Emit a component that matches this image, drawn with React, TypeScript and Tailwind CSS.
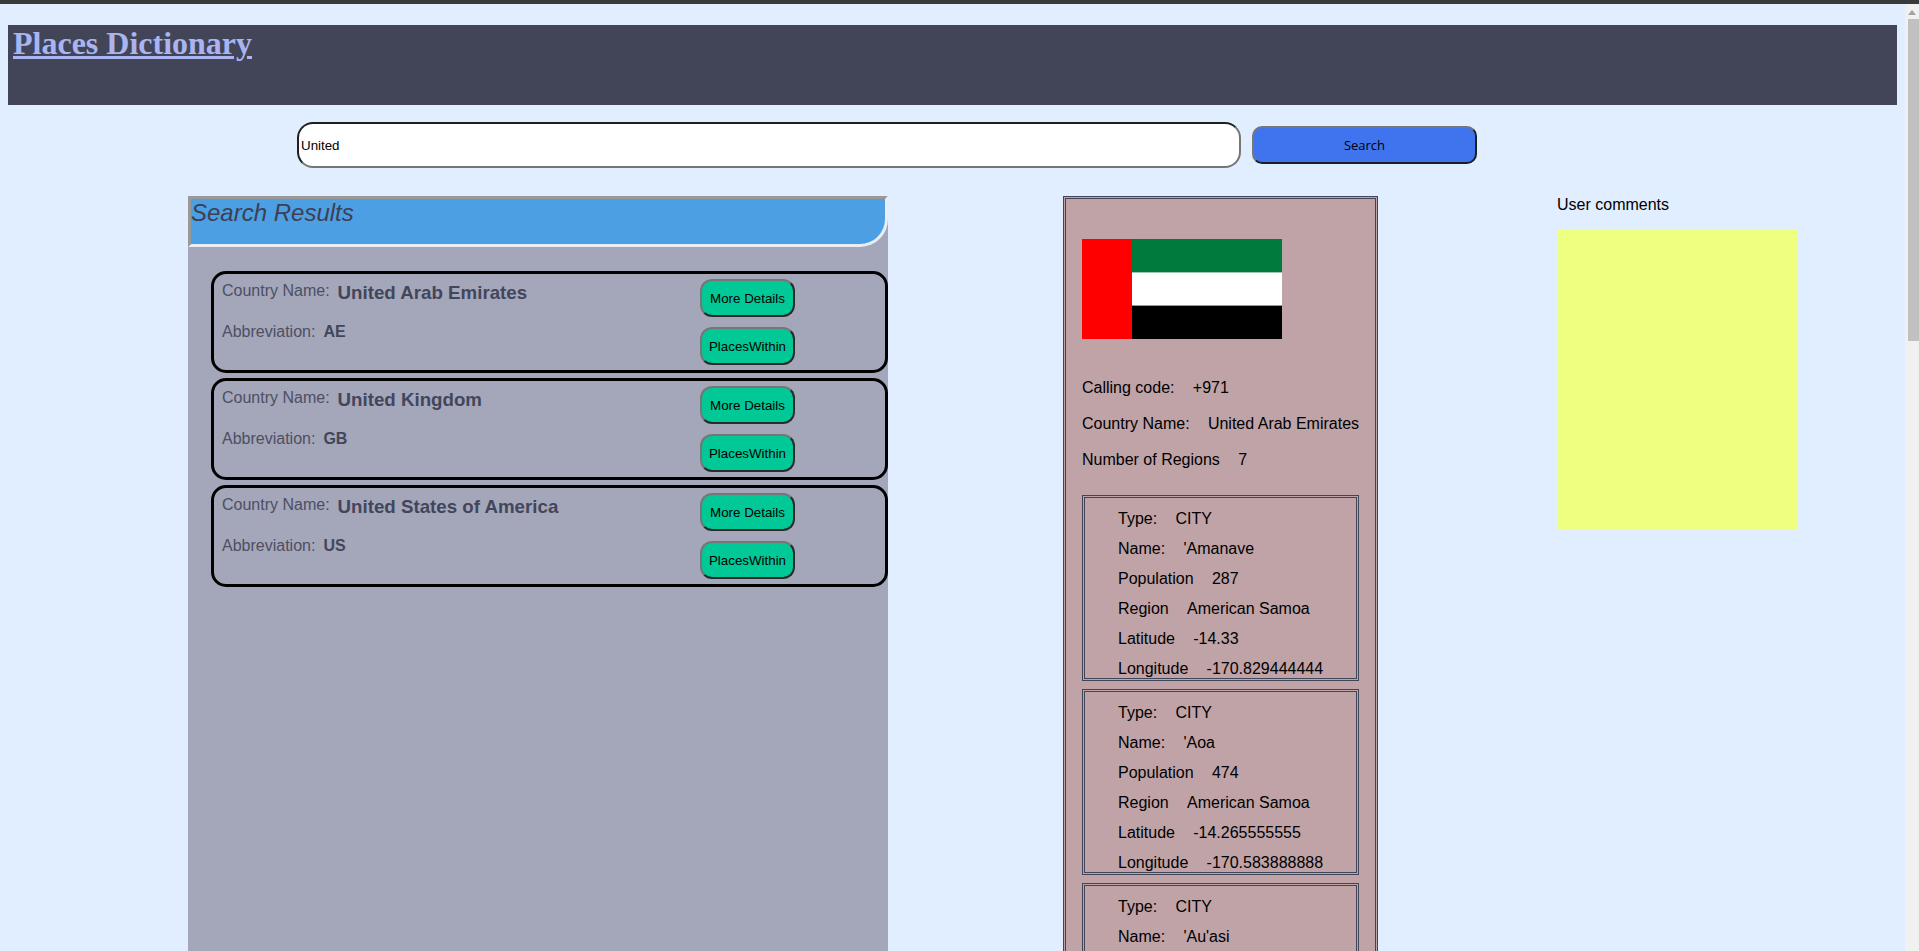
import React from 'react';

const results = [
  { name: 'United Arab Emirates', abbr: 'AE' },
  { name: 'United Kingdom', abbr: 'GB' },
  { name: 'United States of America', abbr: 'US' },
];

const places = [
  { name: "'Amanave", population: '287', lat: '-14.33', lng: '-170.829444444' },
  { name: "'Aoa", population: '474', lat: '-14.265555555', lng: '-170.583888888' },
  { name: "'Au'asi", population: '', lat: '', lng: '' },
];

const Pair = ({ label, value }: { label: string; value: string }) => (
  <span className="whitespace-pre">
    <span>{label}</span>
    <span className="ml-[18.3px]">{value}</span>
  </span>
);

const ResultCard = ({ name, abbr }: { name: string; abbr: string }) => (
  <div className="flex h-[102px] rounded-[15px] border-[3px] border-black pl-[8px] pt-[5px]">
    <div className="w-[478px] text-[#4d4f63]">
      <div className="flex h-[41px] items-start gap-[8px]">
        <span className="text-[16px] leading-[24px]">Country Name:</span>
        <span className="text-[18.72px] font-bold leading-[28px] text-[#43465a]">{name}</span>
      </div>
      <div className="flex items-start gap-[8px]">
        <span className="text-[16px] leading-[24px]">Abbreviation:</span>
        <span className="text-[16px] font-bold leading-[24px] text-[#43465a]">{abbr}</span>
      </div>
    </div>
    <div className="flex flex-col gap-[10px]">
      <button className="h-[38px] w-[95px] rounded-[12px] border-2 border-t-[#767676] border-r-[#2b2b2b] border-b-[#2b2b2b] border-l-[#767676] bg-[#00c896] pt-[1px] text-[13.33px] text-black">
        More Details
      </button>
      <button className="h-[38px] w-[95px] rounded-[12px] border-2 border-t-[#767676] border-r-[#2b2b2b] border-b-[#2b2b2b] border-l-[#767676] bg-[#00c896] pt-[1px] text-[13.33px] text-black">
        PlacesWithin
      </button>
    </div>
  </div>
);

const PlaceBox = ({ name, population, lat, lng }: (typeof places)[number]) => (
  <div className="h-[186px] shrink-0 overflow-hidden border-[3px] border-double border-[#424557] pl-[33px] pt-[6px] leading-[30px]">
    <div><Pair label="Type:" value="CITY" /></div>
    <div><Pair label="Name:" value={name} /></div>
    <div><Pair label="Population" value={population} /></div>
    <div><Pair label="Region" value="American Samoa" /></div>
    <div><Pair label="Latitude" value={lat} /></div>
    <div><Pair label="Longitude" value={lng} /></div>
  </div>
);

export default function App() {
  return (
    <div className="flex h-[951px] flex-col overflow-hidden bg-[#e0eeff] font-['Liberation_Sans',sans-serif] text-[16px] text-black">
      <div className="h-[4px] shrink-0 bg-[#3a3a3a]" />
      <div className="flex min-h-0 flex-1">
        <main className="min-w-0 flex-1">
          <header className="ml-[8px] mr-[8px] mt-[21px] h-[80px] bg-[#424557] pl-[5px]">
            <a className="font-['Liberation_Serif',serif] text-[32px] font-bold leading-[37px] text-[#a9b4f0] underline">
              Places Dictionary
            </a>
          </header>

          <div className="ml-[297px] mt-[17px] flex items-start gap-[11px]">
            <div className="flex h-[46px] w-[944px] items-center rounded-[16px] border-2 border-t-[#1f1f1f] border-r-[#767676] border-b-[#767676] border-l-[#1f1f1f] bg-white pl-[2px] pt-[1px] text-[13.33px]">
              United
            </div>
            <button className="mt-[4px] h-[38px] w-[225px] rounded-[10px] border-2 border-t-[#767676] border-r-[#1f1f1f] border-b-[#1f1f1f] border-l-[#767676] bg-[#3f74ee] pt-[1px] font-['Open_Sans',sans-serif] text-[13px] text-black">
              Search
            </button>
          </div>

          <div className="mt-[28px] flex items-start">
            <section className="ml-[188px] h-[760px] w-[700px] bg-[#a4a6ba]">
              <div className="h-[51px] rounded-br-[28px] border-[3px] border-t-[#999999] border-r-[#e8eef4] border-b-[#e8eef4] border-l-[#999999] bg-[#4c9fe3] text-[24px] italic leading-[28px] text-[#3d4054]">
                Search Results
              </div>
              <div className="ml-[23px] mt-[24px] flex flex-col gap-[5px]">
                {results.map((r) => (
                  <ResultCard key={r.abbr} {...r} />
                ))}
              </div>
            </section>

            <section className="ml-[175px] h-[760px] w-[315px] overflow-hidden border-[3px] border-double border-[#424557] bg-[#bfa3a7] pl-[16px] pr-[16px]">
              <svg className="mt-[40px] block" width="200" height="100" viewBox="0 0 200 100">
                <rect width="200" height="100" fill="#ffffff" />
                <rect x="50" width="150" height="33.4" fill="#007a3d" />
                <rect x="50" y="66.6" width="150" height="33.4" fill="#000000" />
                <rect width="50" height="100" fill="#ff0000" />
              </svg>
              <div className="mt-[37px] flex flex-col gap-[12px] leading-[24px]">
                <Pair label="Calling code:" value="+971" />
                <Pair label="Country Name:" value="United Arab Emirates" />
                <Pair label="Number of Regions" value="7" />
              </div>
              <div className="mt-[23px] flex w-[277px] flex-col gap-[8px]">
                {places.map((p) => (
                  <PlaceBox key={p.name} {...p} />
                ))}
              </div>
            </section>

            <aside className="ml-[179px] w-[240px]">
              <p className="mb-[16px] leading-[18px]">User comments</p>
              <div className="h-[300px] w-[240px] bg-[#efff7f]" />
            </aside>
          </div>
        </main>

        {/* page scrollbar */}
        <div className="flex w-[14px] shrink-0 flex-col items-center bg-[#f1f1f1]">
          <div className="mt-[6px] h-0 w-0 border-x-[4px] border-b-[5px] border-x-transparent border-b-[#a3a3a3]" />
          <div className="ml-[2px] mt-[4px] h-[322px] w-[11px] bg-[#c1c1c1]" />
        </div>
      </div>
    </div>
  );
}
